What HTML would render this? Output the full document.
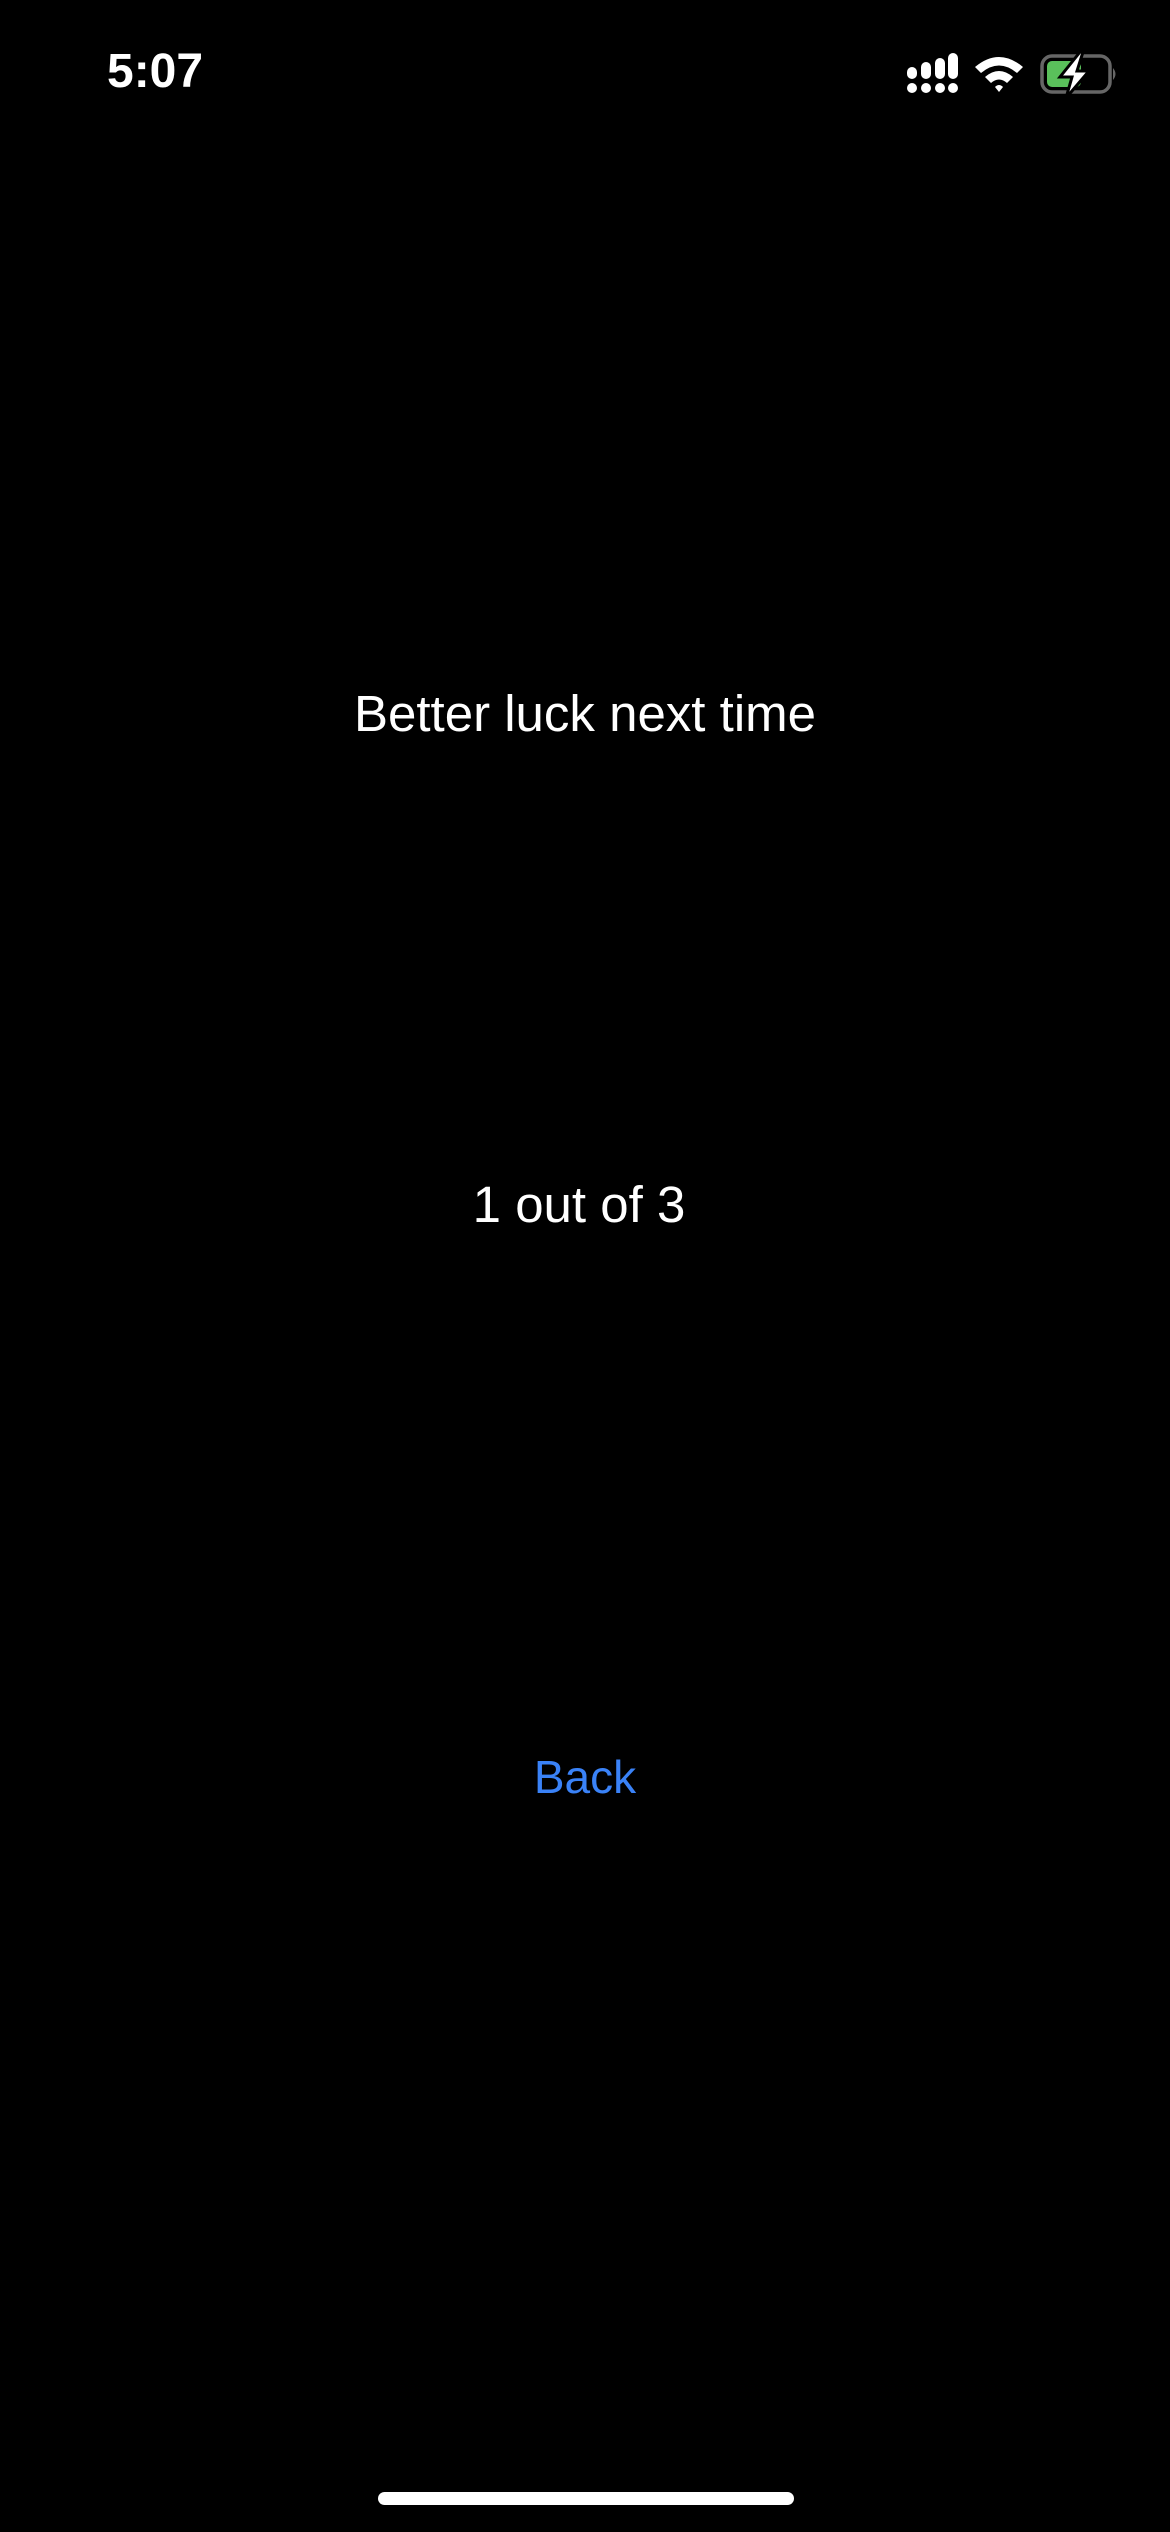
<!DOCTYPE html>
<html><head><style>
body{margin:0;width:1170px;height:2532px;background:#000;position:relative;overflow:hidden;font-family:"Liberation Sans",sans-serif;color:#fff}
.t{position:absolute;left:0;width:1170px;text-align:center;white-space:nowrap}
</style></head><body>
<div style="position:absolute;left:107px;top:44px;font-size:48px;font-weight:bold;">5:07</div>
<svg style="position:absolute;left:900px;top:50px" width="230" height="50" viewBox="0 0 230 50">
<g fill="#fff">
<rect x="7" y="17" width="10" height="12" rx="5"/><rect x="21" y="12" width="10" height="17" rx="5"/><rect x="35" y="8" width="10" height="21" rx="5"/><rect x="48" y="3" width="10" height="26" rx="5"/>
<circle cx="12" cy="38" r="5"/><circle cx="26" cy="38" r="5"/><circle cx="40" cy="38" r="5"/><circle cx="53" cy="38" r="5"/>
<path d="M75 17 Q99 -3 123 17 L117 23 Q99 8 81 23Z"/><path d="M85 27 Q99 15 113 27 L107 33 Q99 26 91 33Z"/><path d="M95 37 Q99 33 103 37 L99 42Z"/>
</g>
<rect x="142" y="6" width="68" height="36" rx="10" fill="none" stroke="#666" stroke-width="3.5"/>
<rect x="147" y="11" width="34" height="26" rx="5" fill="#5ac05b"/>
<path d="M213 18 Q218 24 213 30Z" fill="#666"/>
<path d="M180 2 L160 27 L172 27 L166 48 L189 21 L177 21 L183 2Z" fill="#fff" stroke="#000" stroke-width="3"/>
</svg>
<div class="t" style="top:684px;font-size:51px;">Better luck next time</div>
<div class="t" style="top:1175px;font-size:51px;left:-6px;">1 out of 3</div>
<div class="t" style="top:1750px;font-size:46px;color:#3a82f7;">Back</div>
<div style="position:absolute;left:378px;top:2492px;width:416px;height:13px;border-radius:7px;background:#fff"></div>
</body></html>
